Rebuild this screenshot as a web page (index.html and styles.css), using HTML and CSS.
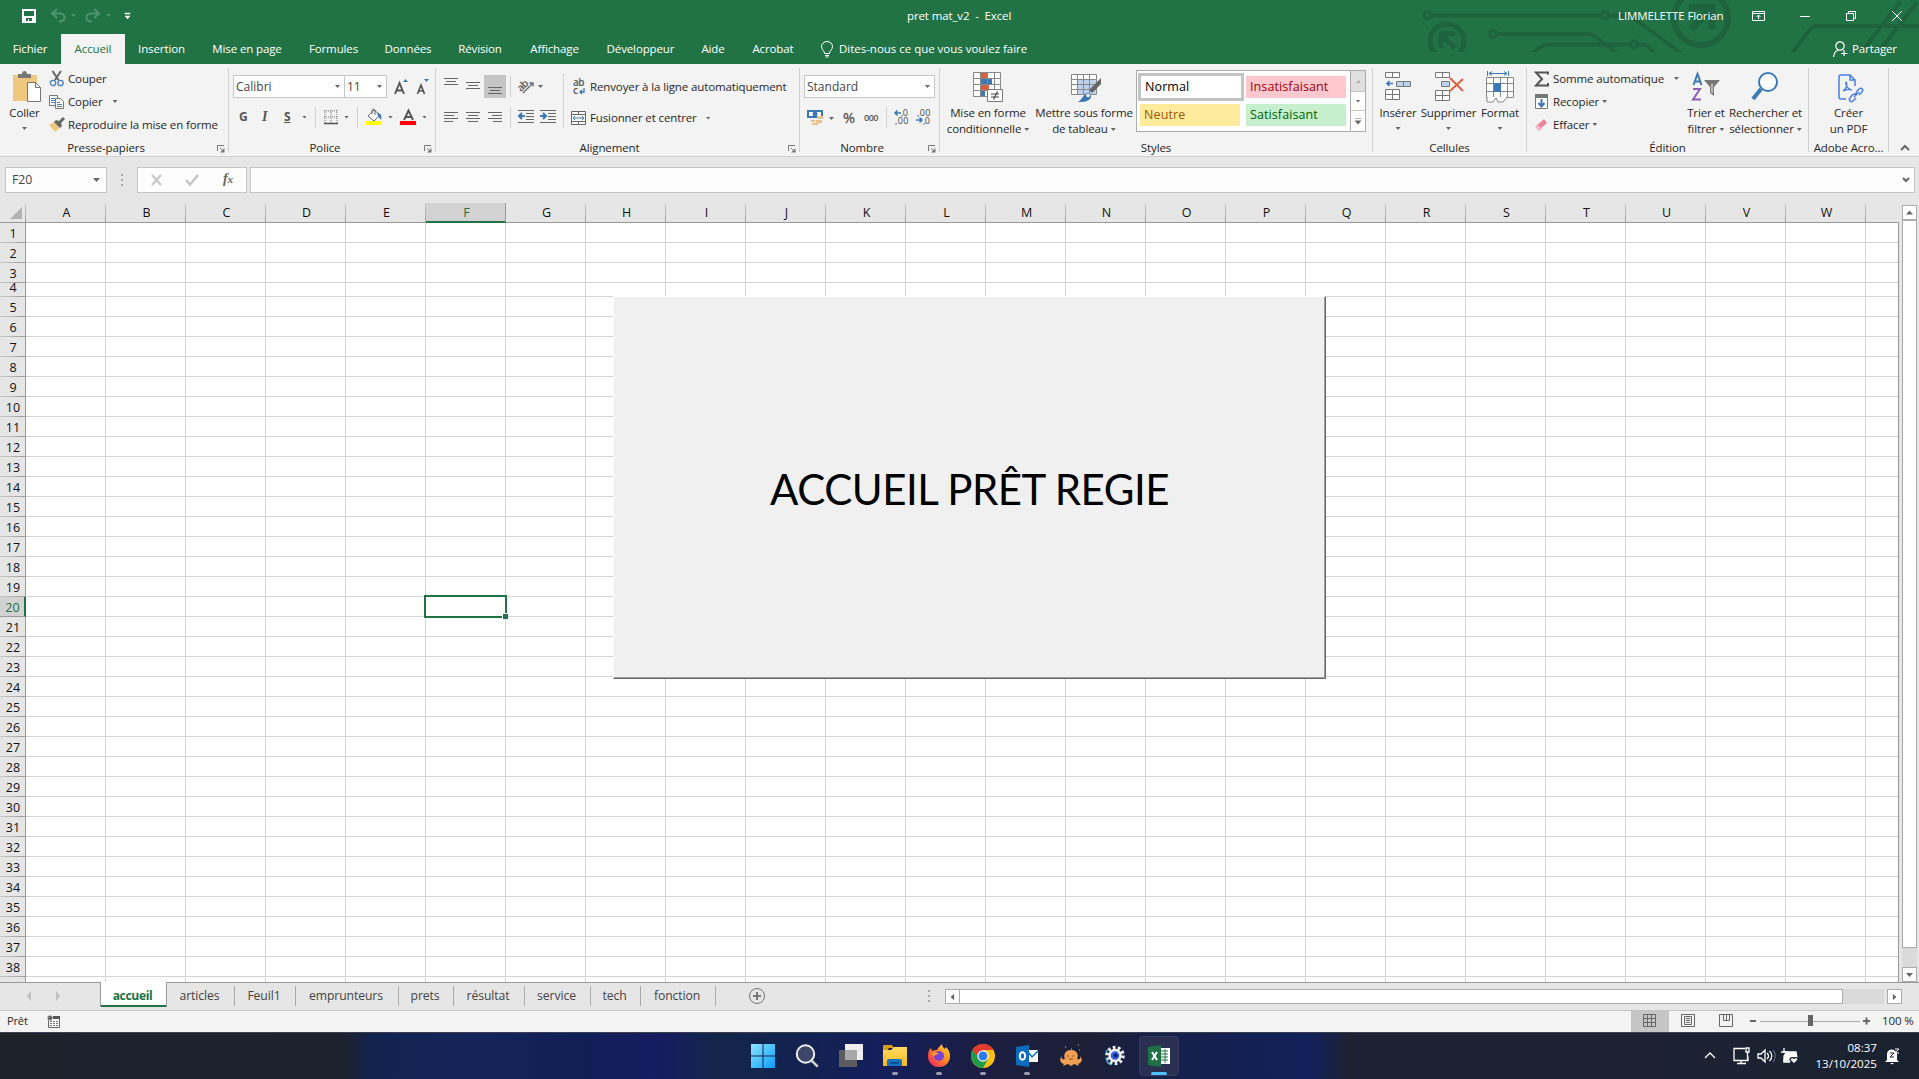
FILE: index.html
```html
<!DOCTYPE html>
<html lang="fr">
<head>
<meta charset="utf-8">
<title>pret mat_v2 - Excel</title>
<link rel="stylesheet" href="styles.css">
</head>
<body>
<svg width="0" height="0" class="defs">
  <defs>
    <symbol id="launch" viewBox="0 0 8 8"><path d="M.5 6V.5H7" fill="none" stroke="#777"/><path d="M3 3l3 3" stroke="#777"/><path d="M7.500 3v4.500H3z" fill="#777"/></symbol>
    <linearGradient id="win" x1="0" y1="0" x2="1" y2="1"><stop offset="0" stop-color="#8be6fd"/><stop offset="1" stop-color="#0c9bfb"/></linearGradient>
    <linearGradient id="ffx" x1="1" y1="0" x2="0" y2="1"><stop offset="0" stop-color="#ffe83d"/><stop offset=".45" stop-color="#ff8a1f"/><stop offset="1" stop-color="#f0146c"/></linearGradient>
    <linearGradient id="fold" x1="0" y1="0" x2="0" y2="1"><stop offset="0" stop-color="#ffdb62"/><stop offset="1" stop-color="#f8b91b"/></linearGradient>
  </defs>
</svg>

<header class="top">
  <svg class="circuit" width="519" height="52" viewBox="0 0 519 52" fill="none" stroke="#1e633d" stroke-width="4">
    <circle cx="27.500" cy="15" r="3.500" stroke-width="3"/><path d="M31 15.500h170"/><circle cx="205" cy="15" r="3.500" stroke-width="3"/><path d="M209 15.500h17c6 0 8 3 12 6l44 32"/>
    <circle cx="47" cy="41" r="17" stroke-width="5"/><path d="M55 33.500H41v14M41 34l14 14" stroke-width="5"/>
    <circle cx="93" cy="34" r="3.500" stroke-width="3"/><path d="M97 34h90c6 0 9 3 13 6l18 14"/>
    <path d="M131 54l10-7c3-2 5-2.500 9-2.500h80M238 44.500h5c4 0 8 4 12 10"/><circle cx="234" cy="44.500" r="3.500" stroke-width="3"/>
    <circle cx="301" cy="18" r="27" stroke-width="6"/><path d="M289 7.500h23v22M311 9l-20 20" stroke-width="7"/>
    <path d="M391 54l18-23c3-4 5-5 9-5h101"/><path d="M460 54l40-52M477 54l40-52"/>
  </svg>
  <div class="titlebar">
    <svg class="quick" width="130" height="18" viewBox="0 0 130 18">
      <path d="M1 2h12v12H1z" fill="none" stroke="#fff" stroke-width="2"/><path d="M1 8h12v6H1z" fill="#fff"/><path d="M4 10h6v3H7v-2H6v2H4z" fill="#217346"/>
      <g fill="none" stroke="#519370" stroke-width="2"><path d="M35 1l-5 4.500 5 4.500M31 5.500h7c6 0 6 8 0 8h-1"/><path d="M72 1l5 4.500-5 4.500M76 5.500h-7c-6 0-6 8 0 8h1"/></g>
      <path d="M49 6h5l-2.500 3zM84 6h5l-2.500 3z" fill="#519370"/><path d="M103 5h5v1h-5zM103 8h5l-2.500 3z" fill="#fff" stroke="#fff" stroke-width=".5"/>
    </svg>
    <div class="doc">pret mat_v2&nbsp; -&nbsp; Excel</div>
    <div class="user">LIMMELETTE Florian</div>
    <svg class="winbtns" width="157" height="14" viewBox="0 0 157 14" fill="none" stroke="#fff">
      <path d="M.5 2.500h12v9H.5zM.5 4.500h12M6.500 10V6M4.500 8l2-2 2 2"/><path d="M48 7.500h10"/><path d="M94.500 4.500h7v7h-7zM96.500 4.500v-2h7v7h-2"/><path d="M140 2l10 10M150 2l-10 10"/>
    </svg>
  </div>
  <nav class="tabs">
    <span class="t1">Fichier</span><span class="t2 on">Accueil</span><span class="t3">Insertion</span><span class="t4">Mise en page</span><span class="t5">Formules</span><span class="t6">Données</span><span class="t7">Révision</span><span class="t8">Affichage</span><span class="t9">Développeur</span><span class="t10">Aide</span><span class="t11">Acrobat</span>
    <svg class="bulb" width="12" height="17" viewBox="0 0 12 17" fill="none" stroke="#fff"><path d="M3.500 12.500c0-3-3-3.500-3-7a5.500 5 0 0 1 11 0c0 3.500-3 4-3 7zM4 14.500h4M4.500 16h3"/></svg>
    <span class="tell">Dites-nous ce que vous voulez faire</span>
    <svg class="person" width="15" height="17" viewBox="0 0 15 17" fill="none" stroke="#fff" stroke-width="1.200"><circle cx="7" cy="5" r="4.200"/><path d="M.6 16c.3-4 2-6 4.400-6.800M11 9v6M8 12.500h6.500"/></svg>
    <span class="share">Partager</span>
  </nav>
</header>

<section class="ribbon">
  <div class="group g1">
    <div class="body">
      <div class="big">
        <svg width="30" height="32" viewBox="0 0 30 32"><path d="M1 4h24v26H1z" fill="#edc87e"/><path d="M6 7V3h4c0-4 5-4 5 0h4v4z" fill="#777"/><path d="M15.500 11.500h8l5 5v14h-13z" fill="#fff" stroke="#777"/><path d="M23.500 11.500v5h5" fill="none" stroke="#777"/></svg>
        <span>Coller</span><i class="ar"></i>
      </div>
      <div class="lines">
        <div><svg width="16" height="16" viewBox="0 0 16 16"><path d="M3.500 0l6 9M12 0L6 9" stroke="#666" stroke-width="2" fill="none"/><circle cx="4" cy="12" r="2.700" fill="none" stroke="#4a80b8" stroke-width="1.300"/><circle cx="11.500" cy="12" r="2.700" fill="none" stroke="#4a80b8" stroke-width="1.300"/></svg><span>Couper</span></div>
        <div><svg width="16" height="16" viewBox="0 0 16 16" fill="#fff" stroke="#777"><path d="M.5 1.500h8v10h-8z"/><path d="M2 4.500h4M2 6.500h4M2 8.500h4" stroke="#4a80b8"/><path d="M6.500 4.500h5l3 3v7h-8z"/><path d="M8 8.500h3M8 10.500h5M8 12.500h5" stroke="#4a80b8"/></svg><span>Copier</span><i class="ar far"></i></div>
        <div><svg width="16" height="16" viewBox="0 0 16 16"><path d="M0 8l5-3 6 6-5 4z" fill="#edc87e"/><path d="M5 5l2-2 3 1 4-4 2 2-4 4 1 3-2 2z" fill="#666"/></svg><span>Reproduire la mise en forme</span></div>
      </div>
    </div>
    <footer><b>Presse-papiers</b><svg class="launch" width="8" height="8"><use href="#launch"/></svg></footer>
  </div>

  <div class="group g2">
    <div class="body stack">
      <div class="row fontrow">
        <div class="combo cfont">Calibri<i class="ar"></i></div><div class="combo csize">11<i class="ar"></i></div>
        <svg class="ml8" width="40" height="18" viewBox="0 0 40 18"><path d="M0 16L4.500 5 9 16M2 12.500h5" fill="none" stroke="#555" stroke-width="1.900"/><path d="M8 4l2.500-3L13 4z" fill="#3c78b4"/><path d="M22.500 16L26 7l3.500 9M24 13h4" fill="none" stroke="#555" stroke-width="1.700"/><path d="M29 1h5l-2.500 3z" fill="#3c78b4"/></svg>
      </div>
      <div class="row fmt">
        <b class="bold">G</b><b class="ital">I</b><b class="und">S</b><i class="ar"></i><u class="sep"></u>
        <svg width="14" height="15" viewBox="0 0 14 15"><path d="M0 1h14M0 7h14M1 0v13M7 0v13M13 0v13" stroke="#777" stroke-dasharray="1 1"/><path d="M0 13.500h14" stroke="#555" stroke-width="1.500"/></svg><i class="ar"></i><u class="sep"></u>
        <svg width="16" height="16" viewBox="0 0 16 16"><path d="M2 7l6-6 6 5-6 6z" fill="#fff" stroke="#666"/><path d="M6 5V1.500c0-2 3-2 3 0V6" fill="none" stroke="#666"/><path d="M11 4c4 0 5 3 4 7l-3-4z" fill="#3c78b4"/><path d="M0 12h16v4H0z" fill="#ff0"/></svg><i class="ar"></i>
        <svg width="16" height="16" viewBox="0 0 16 16"><path d="M4 11L8.500 1.500 13 11M5.500 8h6" fill="none" stroke="#555" stroke-width="1.900"/><path d="M0 12h16v4H0z" fill="red"/></svg><i class="ar"></i>
      </div>
    </div>
    <footer><b>Police</b><svg class="launch" width="8" height="8"><use href="#launch"/></svg></footer>
  </div>

  <div class="group g3">
    <div class="body cols">
      <svg class="aligns" width="112" height="56" viewBox="0 0 112 56">
        <path d="M40 1h22v23H40z" fill="#c5c5c5"/>
        <g stroke="#666" fill="none"><path d="M0 4.500h14M2 7.500h10M0 10.500h14M22 8.500h14M24 11.500h10M22 14.500h14M44 13.500h14M46 16.500h10M44 19.500h14"/>
        <path d="M0 38.500h14M0 41.500h10M0 44.500h14M0 47.500h9M22 38.500h14M24 41.500h10M22 44.500h14M24 47.500h10M44 38.500h14M48 41.500h10M44 44.500h14M49 47.500h9"/>
        <path d="M74 36.500h16M82 39.500h8M82 42.500h8M82 45.500h8M74 48.500h16M96 36.500h16M104 39.500h8M104 42.500h8M104 45.500h8M96 48.500h16"/></g>
        <path d="M66.500 2v21M66.500 33v21" stroke="#d0d0d0"/>
        <g stroke="#3c78b4" fill="none" stroke-width="2"><path d="M81 42h-6M78 39l-3 3 3 3M96 42h6M99 39l3 3-3 3"/></g>
        <text x="73" y="15" font-size="10.500" font-weight="600" fill="#555" transform="rotate(-45 79 12)">ab</text><path d="M79 19l10-10M85.500 9H89v3.500" stroke="#666" fill="none" stroke-width="1.300"/><path d="M94 11h5l-2.500 3z" fill="#666"/>
      </svg>
      <u class="sep tall"></u>
      <div class="wraps">
        <div><svg width="16" height="20" viewBox="0 0 16 20"><text x="2" y="9" font-size="10" font-weight="600" fill="#555">ab</text><text x="2" y="17" font-size="10" font-weight="600" fill="#555">c</text><path d="M13 11v4h-4M11 13l-2 2 2 2" fill="none" stroke="#3c78b4" stroke-width="1.300"/></svg><span>Renvoyer à la ligne automatiquement</span></div>
        <div><svg width="16" height="16" viewBox="0 0 16 16" fill="#fff" stroke="#666"><path d="M.5 1.500h14v13H.5zM.5 4.500h14M.5 11.500h14M7.500 1.500v3M7.500 11.500v3"/><path d="M2 8h11M4 6L2 8l2 2M11 6l2 2-2 2" stroke="#3c78b4" fill="none"/></svg><span>Fusionner et centrer</span><i class="ar far"></i></div>
      </div>
    </div>
    <footer><b>Alignement</b><svg class="launch" width="8" height="8"><use href="#launch"/></svg></footer>
  </div>

  <div class="group g4">
    <div class="body stack">
      <div class="row"><div class="combo cnum">Standard<i class="ar"></i></div></div>
      <svg class="nums" width="126" height="22" viewBox="0 0 126 22">
        <path d="M0 3h16v8H0z" fill="#3c78b4"/><path d="M2 5h12v4H2z" fill="#fff"/><circle cx="8" cy="7" r="2.500" fill="#3c78b4"/><path d="M10 9h6v3h-6zM9 13h6v3H9zM4 13h4v2H4zM5 16h6v2H5z" fill="#edc08a"/>
        <path d="M22 10h5l-2.500 3z" fill="#666"/><text x="36" y="16" font-size="14.500" fill="#555" stroke="#555" stroke-width=".3">%</text><text x="57" y="14" font-size="9" font-weight="600" fill="#555" textLength="14">000</text>
        <path d="M79.500 0v21" stroke="#d0d0d0"/>
        <g font-size="9" fill="#444"><text x="94" y="9">,0</text><text x="88" y="17" textLength="13">,00</text><text x="110" y="9" textLength="13">,00</text><text x="116" y="17">,0</text></g>
        <path d="M94 6h-6M90.500 3.500L88 6l2.500 2.500M109 13h6M112.500 10.500L115 13l-2.500 2.500" fill="none" stroke="#3c78b4" stroke-width="1.500"/>
      </svg>
    </div>
    <footer><b>Nombre</b><svg class="launch" width="8" height="8"><use href="#launch"/></svg></footer>
  </div>

  <div class="group g5">
    <div class="body">
      <div class="big">
        <svg width="30" height="32" viewBox="0 0 30 32"><path d="M.5 1.500h27v24H.5z" fill="#fff"/><path d="M8 1h6v7H8zM8 14h8v5H8z" fill="#d9603c"/><path d="M8 8h11v6H8zM8 19h4v7H8z" fill="#3c78b4"/><path d="M.5 1.500h27v24H.5zM.5 7.500h27M.5 13.500h27M.5 19.500h27M7.500 1.500v24M14.500 1.500v24M21.500 1.500v24" fill="none" stroke="#888"/><path d="M14.500 18.500h15v12h-15z" fill="#fff" stroke="#777"/><path d="M18 23h8M18 26h8M24.500 20.500l-4 8" stroke="#444" stroke-width="1.200"/></svg>
        <span>Mise en forme</span><span>conditionnelle<i class="ar"></i></span>
      </div>
      <div class="big">
        <svg class="shift" width="30" height="32" viewBox="0 0 30 32"><path d="M.5 3.500h25v20H.5z" fill="#fff"/><path d="M7 8h18v15H7z" fill="#bdd3eb"/><path d="M.5 3.500h25v20H.5zM.5 8.500h25M.5 13.500h25M.5 18.500h25M6.500 3.500v20M12.500 3.500v20M18.500 3.500v20" fill="none" stroke="#888"/><path d="M30 7v6l-9 9-3-3z" fill="#666"/><path d="M7 31c4-2 5-8 10-9 3 1 4 4 2 6-3 3-8 3-12 3z" fill="#3c78b4"/><circle cx="17" cy="24.500" r="1.800" fill="#fff"/></svg>
        <span>Mettre sous forme</span><span>de tableau<i class="ar"></i></span>
      </div>
      <div class="gallery">
        <div class="swatches"><span class="normal">Normal</span><span class="bad">Insatisfaisant</span><span class="neutral">Neutre</span><span class="good">Satisfaisant</span></div>
        <div class="gscroll"><i></i><i></i><i></i></div>
      </div>
    </div>
    <footer><b>Styles</b></footer>
  </div>

  <div class="group g6">
    <div class="body">
      <div class="big w1"><svg width="30" height="32" viewBox="0 0 30 32" fill="#fff" stroke="#777"><path d="M2.500 1.500h14v5h-14zM9.500 1.500v5M2.500 18.500h14v10h-14zM9.500 18.500v10M2.500 23.500h14"/><path d="M13.500 10.500h14v5h-14zM20.500 10.500v5" fill="#bdd3eb"/><path d="M10 12.500H4M6.500 10L4 12.500 6.500 15" stroke="#3c78b4" stroke-width="1.700" fill="none"/></svg><span>Insérer</span><i class="ar"></i></div>
      <div class="big w2"><svg width="30" height="32" viewBox="0 0 30 32" fill="#fff" stroke="#777"><path d="M1.500 1.500h14v5h-14zM8.500 1.500v5M1.500 19.500h14v10h-14zM8.500 19.500v10M1.500 24.500h14"/><path d="M7.500 10.500h8v5h-8z" fill="#bdd3eb"/><path d="M16 7l13 13M29 8L16 20" stroke="#e0623c" stroke-width="2"/></svg><span>Supprimer</span><i class="ar"></i></div>
      <div class="big w3"><svg width="30" height="32" viewBox="0 0 30 32" fill="#fff" stroke="#888"><path d="M1.500 6.500h27v20h-27zM1.500 12.500h27M1.500 20.500h27M8.500 6.500v20M15.500 6.500v20M22.500 6.500v20"/><path d="M9 12h7v9H9z" fill="#3c78b4" stroke="none"/><path d="M2 26v5h6l3-4 2 4h5l4-5" /><path d="M2.500 0v5M23.500 0v5M4 2.500h18M7 .5l-3 2 3 2M19 .5l3 2-3 2" stroke="#3c78b4" fill="none"/></svg><span>Format</span><i class="ar"></i></div>
    </div>
    <footer><b>Cellules</b></footer>
  </div>

  <div class="group g7">
    <div class="body">
      <div class="lines">
        <div><svg width="16" height="16" viewBox="0 0 16 16"><path d="M14 3.500V1.500H2L8 8l-6 6.500h12v-2.500" fill="none" stroke="#555" stroke-width="2"/></svg><span>Somme automatique</span><i class="ar far"></i></div>
        <div><svg width="16" height="16" viewBox="0 0 16 16"><path d="M1.500 1.500h12v13h-12z" fill="#fff" stroke="#777"/><path d="M1 0h13v4H1z" fill="#777"/><path d="M7.500 5v7M4.500 9l3 3.500 3-3.500" fill="none" stroke="#3c78b4" stroke-width="2"/></svg><span>Recopier</span><i class="ar"></i></div>
        <div><svg width="16" height="16" viewBox="0 0 16 16"><path d="M2 9l8-7 3 4-8 7z" fill="#e8879a"/><path d="M1 10l3-2 4 4-3 2z" fill="#f4b6c2"/></svg><span>Effacer</span><i class="ar"></i></div>
      </div>
      <div class="big w4"><svg width="30" height="32" viewBox="0 0 30 32"><path d="M2.500 14L6.500 3l4 11M4 10.500h5" fill="none" stroke="#3c78b4" stroke-width="2"/><path d="M2 18h7L2 28.500h8" fill="none" stroke="#8c5fb5" stroke-width="2"/><path d="M13 9h16l-6 7v9l-4-3v-6z" fill="#777"/><path d="M21 13v9" stroke="#fff" stroke-width="1"/></svg><span>Trier et</span><span>filtrer<i class="ar"></i></span></div>
      <div class="big w5"><svg width="30" height="32" viewBox="0 0 30 32"><circle cx="17" cy="11" r="9" fill="#fff" stroke="#3c78b4" stroke-width="2"/><path d="M10 18L2 28" stroke="#3c78b4" stroke-width="4" /></svg><span>Rechercher et</span><span>sélectionner<i class="ar"></i></span></div>
    </div>
    <footer><b>Édition</b></footer>
  </div>

  <div class="group g8">
    <div class="body">
      <div class="big"><svg class="shift" width="30" height="32" viewBox="0 0 30 32" fill="none" stroke="#4a7fe0" stroke-width="1.500"><path d="M20 15V9l-5-5H6a2 2 0 0 0-2 2v20a2 2 0 0 0 2 2h5M15 4v5h5"/><path d="M8 20c5-3 4-9 3-9s0 7 6 8c-3-1-6 0-9 1z" stroke-width="1.200"/><path d="M21 21l3-3c3-2 5 1 3 3l-3 3M22 22l-5 2-2 3c-2 2 1 5 3 3l3-3M19 26l5-5" /></svg><span>Créer</span><span>un PDF</span></div>
    </div>
    <footer><b>Adobe Acro...</b></footer>
  </div>
  <svg class="collapse" width="10" height="7" viewBox="0 0 10 7"><path d="M1 6l4-4 4 4" fill="none" stroke="#666" stroke-width="2"/></svg>
</section>

<section class="formula">
  <div class="namebox"><span>F20</span><i class="ar lg"></i></div>
  <div class="dots"><i></i><i></i><i></i></div>
  <div class="fxbox"><svg width="84" height="16" viewBox="0 0 84 16"><path d="M3 3l9 10M12 3L3 13" stroke="#c5c5c5" stroke-width="2"/><path d="M37 8l4 4.500 8-9.500" stroke="#c5c5c5" stroke-width="2.500" fill="none"/></svg><span class="fx">f<small>x</small></span></div>
  <div class="input"><svg width="8" height="6" viewBox="0 0 8 6"><path d="M1 1l3 3 3-3" fill="none" stroke="#666" stroke-width="2"/></svg></div>
</section>

<main class="sheet">
  <div class="grid">
    <div class="heads">
      <div class="corner"><svg width="12" height="12" viewBox="0 0 12 12"><path d="M12 0v12H0z" fill="#b2b2b2"/></svg></div>
      <span>A</span><span>B</span><span>C</span><span>D</span><span>E</span><span class="sel">F</span><span>G</span><span>H</span><span>I</span><span>J</span><span>K</span><span>L</span><span>M</span><span>N</span><span>O</span><span>P</span><span>Q</span><span>R</span><span>S</span><span>T</span><span>U</span><span>V</span><span>W</span>
    </div>
    <div class="area">
      <div class="nums-col">
        <span>1</span><span>2</span><span>3</span><span class="short">4</span><span>5</span><span>6</span><span>7</span><span>8</span><span>9</span><span>10</span><span>11</span><span>12</span><span>13</span><span>14</span><span>15</span><span>16</span><span>17</span><span>18</span><span>19</span><span class="sel">20</span><span>21</span><span>22</span><span>23</span><span>24</span><span>25</span><span>26</span><span>27</span><span>28</span><span>29</span><span>30</span><span>31</span><span>32</span><span>33</span><span>34</span><span>35</span><span>36</span><span>37</span><span>38</span>
      </div>
      <div class="cells">
        <div class="lines-top"></div>
        <div class="lines-rest"></div>
        <div class="cursor"><i></i></div>
        <button class="launchbtn" type="button">ACCUEIL PRÊT REGIE</button>
      </div>
    </div>
  </div>
  <div class="vscroll"><div class="sb up"></div><div class="thumb"></div><div class="track"></div><div class="sb down"></div></div>
</main>

<section class="sheets">
  <svg class="nav" width="100" height="28" viewBox="0 0 100 28"><path d="M31 9v10l-4-5zM56 9v10l4-5z" fill="#c0c0c0"/></svg>
  <span class="s1 on">accueil</span><span class="s2">articles</span><span class="s3">Feuil1</span><span class="s4">emprunteurs</span><span class="s5">prets</span><span class="s6">résultat</span><span class="s7">service</span><span class="s8">tech</span><span class="s9">fonction</span>
  <svg class="add" width="18" height="18" viewBox="0 0 18 18" fill="none" stroke="#777"><circle cx="9" cy="9" r="7.500"/><path d="M5 9h8M9 5v8" stroke-width="2"/></svg>
  <div class="dots"><i></i><i></i><i></i></div>
  <div class="hscroll"><div class="sb left"></div><div class="hthumb"></div><div class="htrack"></div><div class="sb right"></div></div>
</section>

<section class="status">
  <span class="ready">Prêt</span>
  <svg width="14" height="14" viewBox="0 0 14 14"><path d="M1.500 3.500h11v9h-11z" fill="#fff" stroke="#666"/><path d="M6 1h7v3H6z" fill="#555"/><circle cx="3" cy="3" r="2.700" fill="#666" stroke="#f3f3f3" stroke-width=".5"/><path d="M3 6.500h9M3 8.500h9M3 10.500h9" stroke="#777" stroke-dasharray="2 1"/></svg>
  <svg class="views" width="240" height="21" viewBox="0 0 240 21" fill="none" stroke="#666">
    <path d="M0 0h38v21H0z" fill="#c5c5c5" stroke="none"/><path d="M12.500 3.500h12v12h-12zM12.500 7.500h12M12.500 11.500h12M16.500 3.500v12M20.500 3.500v12"/>
    <path d="M50.500 3.500h13v12h-13zM53.500 5.500h7v8h-7zM55 7.500h4M55 9.500h4M55 11.500h4"/><path d="M88.500 3.500h13v12h-13zM92.500 3.500v6h6v-6M95.500 3.500v6"/>
    <path d="M119 10h6M232 10h7M235.500 6.500v7" stroke-width="2"/><path d="M129 10.500h100" stroke="#aaa"/><path d="M177 4h5v11h-5z" fill="#666" stroke="none"/>
  </svg>
  <span class="pct">100 %</span>
</section>

<footer class="taskbar">
  <div class="apps">
    <div><svg viewBox="0 0 24 24"><path d="M0 0h11.500v11.500H0zM12.500 0H24v11.500H12.500zM0 12.500h11.500V24H0zM12.500 12.500H24V24H12.500z" fill="url(#win)"/></svg></div>
    <div><svg viewBox="0 0 24 24"><path d="M16 16l6 6" stroke="#ccc" stroke-width="2.500" stroke-linecap="round"/><circle cx="10.500" cy="10" r="8.700" fill="#3c4668" stroke="#eee" stroke-width="2"/></svg></div>
    <div><svg viewBox="0 0 24 24"><path d="M0 6h18v17H0z" fill="#5c5c5c"/><path d="M6 0h18v16H6z" fill="#eee"/><path d="M6 6h12v10H6z" fill="#a8a8a8"/></svg></div>
    <div class="run"><svg viewBox="0 0 24 24"><path d="M0 2q0-1 1-1h8l2 3h-5l-2 3H0z" fill="#d99b11"/><path d="M0 6h8l3-3h13v19H0z" fill="url(#fold)"/><path d="M4 22v-5q0-2 2-2h11q2 0 2 2v5z" fill="#1373c4"/><path d="M7 18h9v2H7z" fill="#0a4f94"/></svg></div>
    <div class="run"><svg viewBox="0 0 24 24"><path d="M12 23C5 23 1 18 1 12c0-4 1-6 3-8l1 3c2-1 4-1 5-1 1-2 3-4 5-6 0 3 2 4 3 5l1-2c3 3 4 6 4 9 0 6-4 11-11 11z" fill="url(#ffx)"/><circle cx="12" cy="12" r="5" fill="#7a43d6"/><path d="M4 9c3-1 6-1 8 1-3 0-4 2-6 2z" fill="#ff9a2b"/></svg></div>
    <div class="run"><svg viewBox="0 0 24 24"><circle cx="12" cy="12" r="12" fill="#fbc116"/><path d="M12 12L1.600 6A12 12 0 0 1 22.400 6H12z" fill="#e33b2e"/><path d="M1.600 6A12 12 0 0 0 12 24l5.200-9H12z" fill="#229a48"/><path d="M1.600 6l6 10 4-4V6z" fill="#229a48"/><path d="M1.600 6A12 12 0 0 1 22.400 6H12L8 10 5 11z" fill="#e33b2e"/><circle cx="12" cy="12" r="5.700" fill="#fff"/><circle cx="12" cy="12" r="4.500" fill="#2d79ee"/></svg></div>
    <div class="run"><svg viewBox="0 0 24 24"><path d="M12 6h11v12H12z" fill="#fff"/><path d="M13 8l4 5 6-6" stroke="#0a6cbd" stroke-width="1.500" fill="none"/><path d="M1 3l13-2v22L1 21z" fill="#0a6cbd"/><ellipse cx="7.500" cy="12" rx="2.700" ry="3.700" fill="none" stroke="#fff" stroke-width="2"/></svg></div>
    <div><svg viewBox="0 0 24 24"><path d="M6 15c-2-4 0-9 6-9s8 5 6 9c3 1 4-1 3-3 3 3 2 7-2 8l1 2-5-2-3 2-3-2-5 2 1-2c-4-1-5-5-2-8-1 2 0 4 3 3z" fill="#f0a052"/><path d="M9 11v2M14 11v2M10 15h4" stroke="#8a4a23"/><path d="M6 3h1M12 5h1M19 1h1M20 6h1" stroke="#bbb"/></svg></div>
    <div><svg viewBox="0 0 24 24"><circle cx="12" cy="11.500" r="8" fill="none" stroke="#e6eef5" stroke-width="3.500" stroke-dasharray="2.700 2.330"/><circle cx="12" cy="11.500" r="5.500" fill="#345fe0" stroke="#eee" stroke-width="2.500"/><circle cx="12.500" cy="11.500" r="2" fill="#081a70"/><path d="M4 6l-1 3M3 14l2 5 3 2" stroke="#4cb0cf" stroke-width="1.500" fill="none"/></svg></div>
    <div class="active"><svg viewBox="0 0 24 24"><path d="M12 4h11v16H12z" fill="#fff"/><path d="M14 7h7M14 10h7M14 13h7M14 16h7M18 5v14" stroke="#217346"/><path d="M1 3l13-2v22L1 21z" fill="#1e7145"/><path d="M5 8l5 8M10 8l-5 8" stroke="#fff" stroke-width="2"/></svg></div>
  </div>
  <div class="tray">
    <svg width="96" height="20" viewBox="0 0 96 20" fill="none" stroke="#fff" stroke-width="1.300"><path d="M1 12l5-5 5 5"/>
      <path d="M41 2.500H30v12h14v-4M37 14.500v3M33 17.500h9M42 2h3v4h-3zM43.500 6v9"/><path d="M54 8h3l4-4v12l-4-4h-3zM63 7c2 2 2 4 0 6M65.500 5c3 3 3 7 0 10"/><path d="M69 4c3 4 3 8 0 12" stroke="#596070"/>
      <path d="M82 6h10l1 6-6 3h-7z" fill="#fff"/><path d="M80 2v5M77 6h6l-3 4v6h6"/><path d="M90 18l-4-4c0-3 4-3 4-1 0-2 4-2 4 1z" fill="#fff" stroke="#1c222e"/></svg>
    <div class="clock"><span>08:37</span><span>13/10/2025</span></div>
    <svg class="bell" width="16" height="18" viewBox="0 0 16 18"><path d="M2 13V7c0-6 9-6 10 0v6l2 2H0zM5 16h4l-2 1.500z" fill="#fff"/><path d="M5 6h4l-4 4h4" stroke="#1c222e" fill="none"/><path d="M10 2h4l-4 4h4" stroke="#fff" fill="none"/></svg>
  </div>
</footer>
</body>
</html>
```

FILE: styles.css
```css
* { box-sizing: border-box; }
body {
  margin: 0; width: 1919px; height: 1079px; overflow: hidden;
  display: flex; flex-direction: column;
  font: 11.5px/16px "Open Sans", "Noto Sans", sans-serif;
  letter-spacing: -0.12px; color: #262626; background: #e6e6e6;
}
body > * { flex: none; }
svg { display: block; flex: none; overflow: visible; }
.defs { position: absolute; }
span, b, small { white-space: nowrap; }

/* title bar and tabs */
.top { height: 64px; background: #217346; color: #fff; position: relative; }
.circuit { position: absolute; left: 1400px; top: 0; overflow: hidden; }
.titlebar { height: 32px; display: flex; align-items: center; position: relative; }
.quick { margin: 2px 0 0 22px; }
.doc { margin-left: 755px; width: 140px; white-space: nowrap; }
.user { margin-left: 571px; width: 108px; white-space: nowrap; }
.winbtns { margin-left: 26px; }
.tabs { height: 30px; margin-top: 2px; display: flex; align-items: center; position: relative; }
.tabs > span { text-align: center; line-height: 30px; }
.tabs .on { background: #f3f3f3; color: #217346; }
.t1 { width: 60px; margin-right: 1px; } .t2 { width: 64px; } .t3 { width: 73px; } .t4 { width: 98px; }
.t5 { width: 75px; } .t6 { width: 74px; } .t7 { width: 70px; } .t8 { width: 79px; }
.t9 { width: 93px; } .t10 { width: 52px; } .t11 { width: 68px; }
.bulb { margin-left: 14px; }
.tabs .tell { width: 190px; margin-left: 6px; text-align: left; letter-spacing: -0.02px; }
.person { margin-left: 804px; }
.tabs .share { margin-left: 4px; }

/* ribbon */
.ribbon { height: 93px; background: #f3f3f3; border-bottom: 1px solid #d0d0d0; display: flex; }
.group { height: 84px; margin-top: 4px; border-right: 1px solid #d0d0d0; display: flex; flex-direction: column; }
.body { height: 72px; display: flex; flex: none; }
.body.stack { flex-direction: column; }
.group footer { height: 16px; flex: none; display: flex; align-items: center; justify-content: center; position: relative; }
.group b { font-weight: 400; }
footer .launch { position: absolute; right: 3px; top: 5px; }
.g1 { width: 229px; } .g2 { width: 207px; } .g3 { width: 364px; } .g4 { width: 140px; }
.g5 { width: 433px; } .g6 { width: 154px; } .g7 { width: 282px; } .g8 { width: 80px; }
.g1 footer { padding-right: 16px; } .g2 footer { padding-right: 14px; }
.g3 footer { padding-right: 16px; } .g4 footer { padding-right: 15px; }

.ar { display: inline-block; flex: none; width: 5px; height: 3px; background: #666; clip-path: polygon(0 0, 100% 0, 50% 100%); }
.ar.lg { width: 7px; height: 4px; }
.big { display: flex; flex-direction: column; align-items: center; padding-top: 3px; }
.big svg { margin-bottom: 2px; }
.big svg.shift { margin-left: 4px; }
.big .ar { margin-top: 6px; }
.big span .ar { margin: 0 0 2px 3px; }
.g1 .big { width: 49px; }
.g1 .big svg { margin-left: 5px; }
.lines { margin-top: -1px; display: flex; flex-direction: column; }
.lines > div { height: 23px; display: flex; align-items: center; gap: 3px; }
.lines .far { margin-left: 7px; }
.row { display: flex; align-items: center; }
.combo { height: 23px; border: 1px solid #c6c6c6; background: #fff; color: #444; display: flex; align-items: center; justify-content: space-between; padding: 0 4px 0 2px; font-size: 12px; letter-spacing: 0; }
.g2 .body { padding: 7px 0 0 4px; }
.cfont { width: 112px; }
.csize { width: 43px; margin-left: -1px; }
.ml8 { margin-left: 8px; }
.fmt { height: 20px; margin-top: 9px; color: #555; font-size: 13px; padding-left: 6px; }
.g2 .fmt b { font-weight: 700; font-size: 12px; }
.bold { width: 23px; }
.g2 .fmt .ital { font-family: "Liberation Serif", serif; font-style: italic; width: 22px; font-size: 14px; }
.und { text-decoration: underline; width: 18px; }
.sep { width: 1px; height: 21px; background: #d0d0d0; margin: 0 8px 0 9px; }
.fmt svg + .ar { margin-left: 6px; margin-right: 0; }
.fmt .ar + svg { margin-left: 7px; }
.fmt .sep { margin-left: 8px; }

.g3 .body { padding: 6px 0 0 8px; }
.sep.tall { height: 54px; margin: 0 7px 0 7px; }
.wraps { display: flex; flex-direction: column; gap: 7px; padding-top: 1px; }
.wraps > div { height: 24px; display: flex; align-items: center; gap: 3px; }
.wraps .far { margin-left: 6px; }
.aligns text, .nums text, .wraps text { letter-spacing: -0.5px; }

.g4 .body { padding: 7px 0 0 4px; }
.cnum { width: 131px; padding-right: 4px; }
.nums { margin: 9px 0 0 3px; }

.g5 .body { padding-left: 4px; }
.g5 .big:nth-child(1) { width: 88px; }
.g5 .big:nth-child(2) { width: 104px; }
.gallery { margin-top: 2px; width: 230px; height: 62px; border: 1px solid #ababab; background: #fff; display: flex; }
.swatches { width: 213px; padding: 2px 0 0 1px; display: grid; grid-template-columns: 107px 100px; grid-template-rows: 28px 28px; align-items: center; font-size: 12.5px; letter-spacing: 0.1px; }
.swatches span { height: 22px; line-height: 21px; padding-left: 4px; width: 100px; }
.swatches .normal { height: 28px; width: 106px; line-height: 22px; border: 3px solid #c3c3c3; padding-left: 4px; color: #000; }
.swatches .neutral { margin-left: 2px; background: #ffeb9c; color: #9c5700; }
.swatches .bad { background: #ffc7ce; color: #9c0006; margin-left: 1px; }
.swatches .good { background: #c6efce; color: #006100; margin-left: 1px; }
.gscroll { width: 15px; border-left: 1px solid #ababab; display: grid; grid-template-rows: 21px 19px 20px; }
.gscroll i { display: flex; align-items: center; justify-content: center; border-bottom: 1px solid #c6c6c6; }
.gscroll i:last-child { border: 0; }
.gscroll i:first-child { background: #e0e0e0; }
.gscroll i::after { content: ""; width: 5px; height: 3px; background: #666; clip-path: polygon(0 0, 100% 0, 50% 100%); }
.gscroll i:first-child::after { transform: rotate(180deg); background: #b0b0b0; }
.gscroll i:last-child::after { height: 7px; width: 7px; clip-path: polygon(0 0, 100% 0, 100% 1px, 0 1px, 0 3px, 100% 3px, 50% 7px, 0 3px); }

.w1 { width: 50px; } .w2 { width: 51px; } .w3 { width: 52px; }
.g7 .body { padding-left: 7px; }
.g7 .lines { width: 151px; }
.w4 { width: 42px; } .w5 { width: 77px; }
.g8 .body { justify-content: center; }
.collapse { margin: 80px 0 0 11px; }

/* formula bar */
.formula { height: 46px; padding: 10px 4px 0 5px; display: flex; }
.formula > div { height: 26px; display: flex; align-items: center; }
.namebox { width: 102px; border: 1px solid #c6c6c6; background: #fdfdfd; padding: 0 6px; justify-content: space-between; font-size: 12.3px; color: #444; }
.formula .dots, .dots { display: flex; flex-direction: column; justify-content: center; gap: 3px; width: 30px; }
.dots i { width: 2px; height: 2px; background: #aaa; }
.fxbox { width: 110px; border: 1px solid #c6c6c6; background: #fdfdfd; padding-left: 11px; }
.fx { font: italic 700 14px/20px "Liberation Serif", serif; color: #666; margin: -3px 0 0 -10px; }
.fx small { font-size: 11px; }
.input { flex: 1; margin-left: 3px; border: 1px solid #c6c6c6; background: #fdfdfd; justify-content: flex-end; padding-right: 4px; }

/* worksheet */
.sheet { height: 779px; display: flex; }
.grid { width: 1899px; display: flex; flex-direction: column; overflow: hidden; }
.heads { height: 20px; display: flex; border-bottom: 1px solid #999; flex: none; font-size: 12.5px; color: #111; letter-spacing: 0; }
.heads span { width: 80px; height: 19px; flex: none; padding-left: 2px; text-align: center; line-height: 19px; border-right: 1px solid; border-image: linear-gradient(#ccc, #999) 1; }
.heads .sel { height: 20px; background: #d2d2d2; color: #217346; border-bottom: 2px solid #217346; border-right: 1px solid #999; border-image: none; }
.corner { width: 26px; height: 19px; border-right: 1px solid; border-image: linear-gradient(#ccc, #999) 1; padding: 4px 0 0 10px; flex: none; }
.area { display: flex; height: 759px; overflow: hidden; border-right: 1px solid #999; }
.nums-col { width: 26px; border-right: 1px solid #999; flex: none; font-size: 12.5px; color: #111; letter-spacing: 0; }
.nums-col span { display: block; height: 20px; line-height: 21px; text-align: center; padding-left: 1px; border-bottom: 1px solid; border-image: linear-gradient(90deg, #ccc, #999) 1; }
.nums-col .short { height: 14px; line-height: 10px; }
.nums-col .sel { background: #d2d2d2; color: #217346; margin-right: -1px; border-right: 2px solid #217346; border-image: none; border-bottom-color: #999; }
.cells { flex: 1; position: relative; background: #fff; }
.lines-top, .lines-rest {
  background-image: linear-gradient(90deg, transparent 79px, #d4d4d4 79px), linear-gradient(transparent 19px, #d4d4d4 19px);
  background-size: 80px 20px;
}
.lines-top { height: 60px; }
.lines-rest { height: 699px; background-position: 0 -6px; }
.cursor { position: absolute; left: 398px; top: 372px; width: 83px; height: 23px; border: 2px solid #217346; }
.cursor i { position: absolute; right: -3px; bottom: -3px; width: 6px; height: 6px; background: #217346; border: 1px solid #fff; border-width: 1px 0 0 1px; }
.launchbtn {
  position: absolute; left: 587px; top: 73px; width: 713px; height: 383px; padding: 2px 0 0 0;
  background: #f0f0f0; border: 1px solid #fff; border-right-color: #666; border-bottom-color: #666;
  box-shadow: inset -1px -1px #a0a0a0; color: #000; font: 42px/60px Lato, sans-serif; letter-spacing: -0.5px;
}
.vscroll { width: 20px; padding: 2px 2px 0 3px; display: flex; flex-direction: column; }
.sb { width: 15px; height: 15px; border: 1px solid #ababab; background: #fff; display: flex; align-items: center; justify-content: center; flex: none; }
.sb::after { content: ""; width: 7px; height: 4px; background: #666; clip-path: polygon(50% 0, 100% 100%, 0 100%); }
.down::after { transform: rotate(180deg); }
.left::after { transform: rotate(-90deg); }
.right::after { transform: rotate(90deg); }
.thumb { width: 15px; height: 728px; border: 1px solid #ababab; background: #fff; }
.track { width: 15px; flex: 1; background: #dadada; }

/* sheet tabs */
.sheets { height: 28px; display: flex; position: relative; background: linear-gradient(#999 1px, #e6e6e6 1px); font-size: 12.2px; letter-spacing: -0.1px; color: #444; }
.sheets > span { text-align: center; height: 20px; margin-top: 4px; padding-right: 2px; line-height: 20px; border-right: 1px solid #ababab; }
.sheets .on { margin-top: 0; height: 25px; padding-top: 4px; line-height: 20px; background: #fff; color: #217346; font-weight: 700; border: solid #999; border-width: 0 1px 0; box-shadow: inset 0 -2px #217346; letter-spacing: -0.4px; }
.s1 { width: 67px; } .s2 { width: 68px; } .s3 { width: 61px; } .s4 { width: 103px; } .s5 { width: 55px; }
.s6 { width: 71px; } .s7 { width: 66px; } .s8 { width: 50px; } .s9 { width: 75px; }
.add { margin: 5px 0 0 32px; }
.sheets .dots { margin-left: 162px; width: 17px; }
.hscroll { display: flex; margin-top: 7px; height: 15px; }
.hthumb { width: 884px; border: 1px solid #ababab; background: #fff; margin-left: -1px; }
.htrack { width: 44px; background: linear-gradient(90deg, #dadada 41px, transparent 41px); }

/* status bar */
.status { height: 22px; background: #f3f3f3; border-top: 1px solid #c6c6c6; display: flex; align-items: center; font-size: 11px; }
.ready { margin: -2px 0 0 7px; width: 40px; }
.views { margin-left: 1570px; }
.pct { margin: -2px 0 0 11px; font-size: 11.5px; }

/* taskbar */
.taskbar {
  height: 47px; display: flex; position: relative; border-top: 1px solid #3a3f50; color: #fff;
  background: linear-gradient(90deg, #1d222b 0, #1c222d 345px, #13234f 370px, #14245a 480px, #111f55 570px, #161c60 660px, #13264a 715px, #132250 800px, #141f5c 880px, #1b1e42 980px, #1c2036 1090px, #16204c 1175px, #12215a 1310px, #1d2233 1350px, #1a2230 1919px);
}
.apps { margin-left: 743px; display: flex; gap: 4px; align-items: center; height: 48px; margin-top: -1px; }
.apps > div { width: 40px; height: 40px; display: flex; align-items: center; justify-content: center; border-radius: 4px; position: relative; }
.apps svg { width: 24px; height: 24px; }
.run::after, .active::after { content: ""; position: absolute; bottom: 1px; width: 6px; height: 3px; border-radius: 2px; background: #9a9cae; }
.active { background: #2b3052; border: 1px solid #363b5a; }
.active::after { width: 16px; background: #4cc2ff; bottom: 0; }
.tray { margin-left: 525px; display: flex; align-items: center; height: 46px; }
.clock { width: 77px; display: flex; flex-direction: column; align-items: flex-end; font-size: 11.6px; letter-spacing: 0; }
.bell { margin-left: 8px; }
```
